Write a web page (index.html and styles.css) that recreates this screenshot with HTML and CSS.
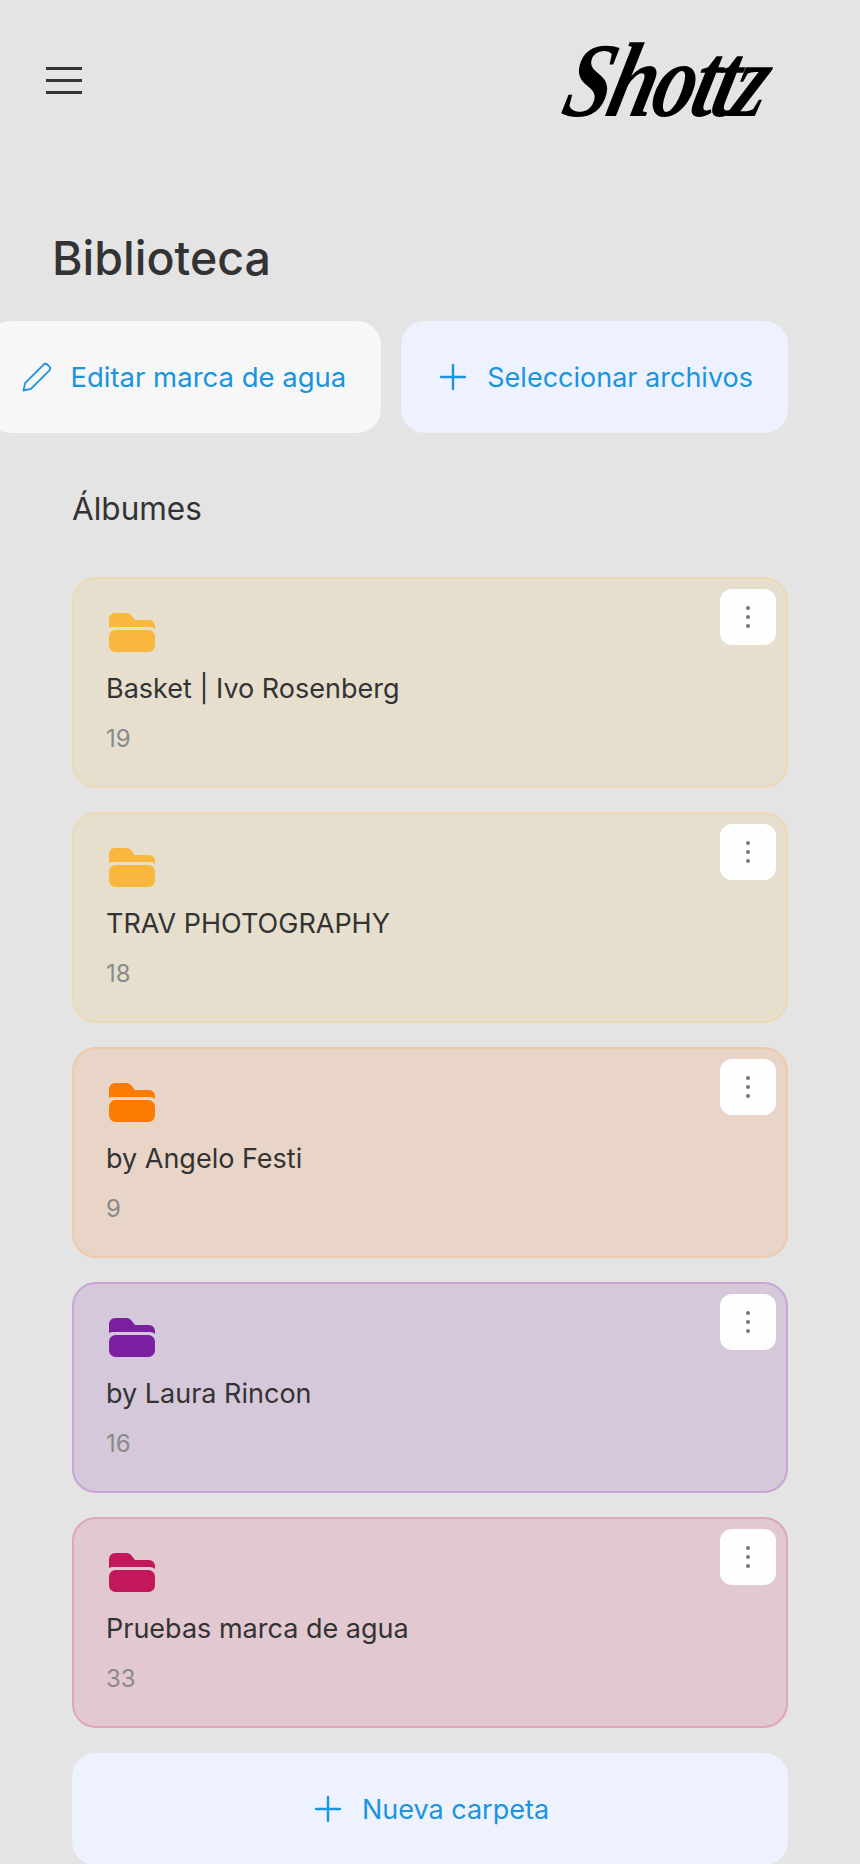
FILE: index.html
```html
<!DOCTYPE html>
<html lang="es">
<head>
    <meta charset="UTF-8">
    <meta name="viewport" content="width=device-width, initial-scale=1.0">
    <title>Shottz - Biblioteca</title>
    <link rel="stylesheet" href="styles.css">
</head>
<body>

    <header class="top-bar">
        <button class="menu-btn" type="button" aria-label="Menu">
            <span></span>
            <span></span>
            <span></span>
        </button>
        <div class="logo">Shottz</div>
    </header>

    <h1 class="page-title">Biblioteca</h1>

    <div class="actions">
        <button class="action-btn light" type="button">
            <svg class="icon-pencil" viewBox="0 0 30 30" fill="none" stroke="currentColor" stroke-width="1.8" stroke-linejoin="round">
                <path d="M1.5 28.5l1.6-7.4L21.4 2.8a3 3 0 0 1 4.2 0l1.6 1.6a3 3 0 0 1 0 4.2L8.9 26.9z"/>
            </svg>
            Editar marca de agua
        </button>
        <button class="action-btn" type="button">
            <svg class="icon-plus" viewBox="0 0 26 26" fill="none" stroke="currentColor" stroke-width="2.4" stroke-linecap="round">
                <path d="M13 1v24M1 13h24"/>
            </svg>
            Seleccionar archivos
        </button>
    </div>

    <section class="albums">
        <h2>Álbumes</h2>

        <article class="album yellow">
            <svg class="folder" viewBox="0 0 46 39"><path d="M0 15V6a6 6 0 0 1 6-6h11.500a6 6 0 0 1 4.500 2l4 5h14a6 6 0 0 1 6 6v3a7 7 0 0 0-5-2H5a7 7 0 0 0-5 1z"/><rect y="17" width="46" height="22" rx="6.500"/></svg>
            <h3>Basket | Ivo Rosenberg</h3>
            <p>19</p>
            <button class="more-btn" type="button" aria-label="Opciones"><span></span><span></span><span></span></button>
        </article>

        <article class="album yellow">
            <svg class="folder" viewBox="0 0 46 39"><path d="M0 15V6a6 6 0 0 1 6-6h11.500a6 6 0 0 1 4.500 2l4 5h14a6 6 0 0 1 6 6v3a7 7 0 0 0-5-2H5a7 7 0 0 0-5 1z"/><rect y="17" width="46" height="22" rx="6.500"/></svg>
            <h3>TRAV PHOTOGRAPHY</h3>
            <p>18</p>
            <button class="more-btn" type="button" aria-label="Opciones"><span></span><span></span><span></span></button>
        </article>

        <article class="album orange">
            <svg class="folder" viewBox="0 0 46 39"><path d="M0 15V6a6 6 0 0 1 6-6h11.500a6 6 0 0 1 4.500 2l4 5h14a6 6 0 0 1 6 6v3a7 7 0 0 0-5-2H5a7 7 0 0 0-5 1z"/><rect y="17" width="46" height="22" rx="6.500"/></svg>
            <h3>by Angelo Festi</h3>
            <p>9</p>
            <button class="more-btn" type="button" aria-label="Opciones"><span></span><span></span><span></span></button>
        </article>

        <article class="album purple">
            <svg class="folder" viewBox="0 0 46 39"><path d="M0 15V6a6 6 0 0 1 6-6h11.500a6 6 0 0 1 4.500 2l4 5h14a6 6 0 0 1 6 6v3a7 7 0 0 0-5-2H5a7 7 0 0 0-5 1z"/><rect y="17" width="46" height="22" rx="6.500"/></svg>
            <h3>by Laura Rincon</h3>
            <p>16</p>
            <button class="more-btn" type="button" aria-label="Opciones"><span></span><span></span><span></span></button>
        </article>

        <article class="album pink">
            <svg class="folder" viewBox="0 0 46 39"><path d="M0 15V6a6 6 0 0 1 6-6h11.500a6 6 0 0 1 4.500 2l4 5h14a6 6 0 0 1 6 6v3a7 7 0 0 0-5-2H5a7 7 0 0 0-5 1z"/><rect y="17" width="46" height="22" rx="6.500"/></svg>
            <h3>Pruebas marca de agua</h3>
            <p>33</p>
            <button class="more-btn" type="button" aria-label="Opciones"><span></span><span></span><span></span></button>
        </article>

        <button class="action-btn new-folder" type="button">
            <svg class="icon-plus" viewBox="0 0 26 26" fill="none" stroke="currentColor" stroke-width="2.4" stroke-linecap="round">
                <path d="M13 1v24M1 13h24"/>
            </svg>
            Nueva carpeta
        </button>
    </section>

</body>
</html>
```

FILE: styles.css
```css
* {
    margin: 0;
    padding: 0;
    box-sizing: border-box;
    font-family: "Inter", "Liberation Sans", sans-serif;
}

html, body {
    height: 1864px;
    overflow: hidden;
}

body {
    background-color: #e4e4e4;
    color: #333;
}

button {
    border: none;
    background: none;
    cursor: pointer;
}

/* Top bar */
.top-bar {
    height: 160px;
    padding: 0 93px 0 46px;
    display: flex;
    justify-content: space-between;
    align-items: center;
}

.menu-btn {
    width: 36px;
    display: flex;
    flex-direction: column;
    gap: 9px;
}

.menu-btn span {
    height: 3px;
    background-color: #333;
}

.logo {
    font-family: "Liberation Serif", serif;
    font-size: 85px;
    font-style: italic;
    font-weight: 700;
    line-height: 100px;
    letter-spacing: -3px;
    color: #000;
    transform: skewX(-14deg) scaleY(1.25);
}

/* Title and buttons */
.page-title {
    margin: 70px 0 0 52px;
    font-size: 46.5px;
    font-weight: 500;
    line-height: 56px;
}

.actions {
    margin-top: 35px;
    padding-right: 72px;
    display: flex;
    justify-content: flex-end;
    gap: 20px;
}

.action-btn {
    height: 112px;
    flex-shrink: 0;
    padding: 0 35px 0 39px;
    display: flex;
    align-items: center;
    gap: 21px;
    border-radius: 24px;
    background-color: #edf2fe;
    color: #1a94e0;
    font-size: 27px;
    white-space: nowrap;
}

.action-btn.light {
    background-color: #f7f7f7;
    padding-left: 35px;
    padding-right: 35px;
    gap: 18px;
    font-size: 27.5px;
}

.icon-plus {
    width: 26px;
    height: 26px;
}

.icon-pencil {
    width: 30px;
    height: 30px;
}

/* Albums */
.albums {
    padding: 0 72px;
}

.albums h2 {
    margin-top: 54px;
    font-size: 31.5px;
    font-weight: 400;
    line-height: 44px;
}

.album {
    position: relative;
    height: 211px;
    margin-top: 24px;
    padding: 34px 32px 0;
    border: 2px solid;
    border-radius: 24px;
}

.albums h2 + .album {
    margin-top: 46px;
}

.folder {
    display: block;
    width: 46px;
    height: 39px;
    margin-left: 3px;
    fill: currentColor;
}

.album h3 {
    margin-top: 17px;
    font-size: 27px;
    font-weight: 400;
    line-height: 40px;
    color: #333;
}

.album p {
    margin-top: 10px;
    font-size: 24px;
    line-height: 40px;
    color: #8a8a8a;
}

.more-btn {
    position: absolute;
    top: 10px;
    right: 10px;
    width: 56px;
    height: 56px;
    display: flex;
    flex-direction: column;
    align-items: center;
    justify-content: center;
    gap: 5px;
    border-radius: 12px;
    background-color: #fefefe;
}

.more-btn span {
    width: 4px;
    height: 4px;
    border-radius: 50%;
    background-color: #777;
}

.yellow {
    background-color: #e6dfce;
    border-color: #eed9b5;
    color: #f9b73d;
}

.orange {
    background-color: #e9d5c8;
    border-color: #eec9ab;
    color: #fb7c00;
}

.purple {
    background-color: #d5c8da;
    border-color: #c8a5d6;
    color: #7b1fa2;
}

.pink {
    background-color: #e2c8d1;
    border-color: #dea6b8;
    color: #c2185b;
}

.new-folder {
    width: 100%;
    margin-top: 25px;
    justify-content: center;
}
```
